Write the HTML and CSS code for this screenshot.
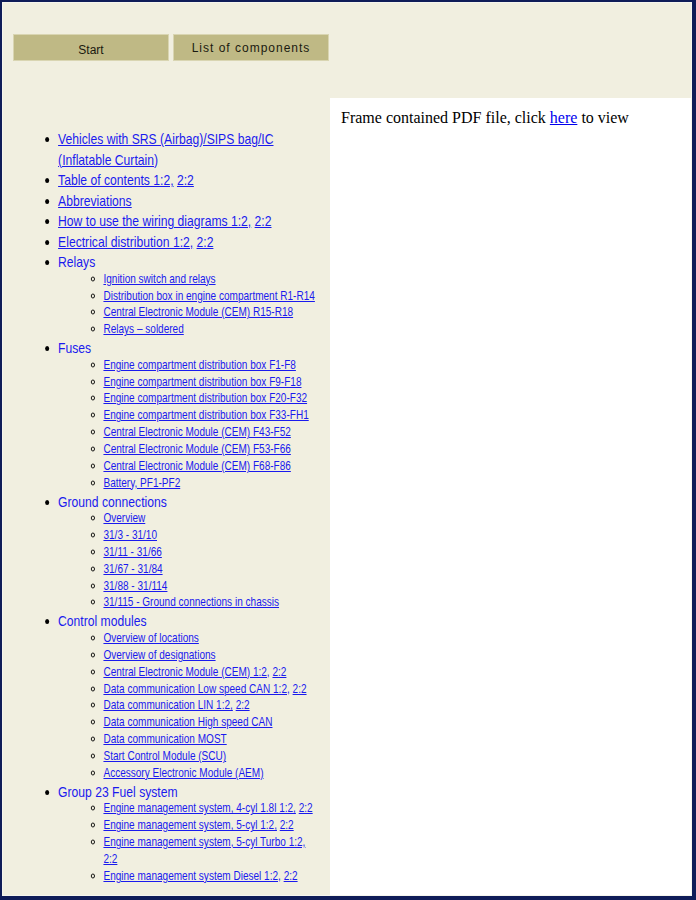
FILE: index.html
```html
<!DOCTYPE html>
<html>
<head>
<meta charset="utf-8">
<link rel="stylesheet" href="styles.css">
</head>
<body>
<div class="window">
  <div class="topbar">
    <a class="btn" href="#">Start</a>
    <a class="btn spaced" href="#">List of components</a>
  </div>
  <div class="main">
    <div class="left">
      <ul class="toc">
        <li><a href="#">Vehicles with SRS (Airbag)/SIPS bag/IC (Inflatable Curtain)</a></li>
        <li><a href="#">Table of contents 1:2,</a> <a href="#">2:2</a></li>
        <li><a href="#">Abbreviations</a></li>
        <li><a href="#">How to use the wiring diagrams 1:2,</a> <a href="#">2:2</a></li>
        <li><a href="#">Electrical distribution 1:2,</a> <a href="#">2:2</a></li>
        <li><span class="head">Relays</span>
          <ul class="sub">
            <li><a href="#">Ignition switch and relays</a></li>
            <li><a href="#">Distribution box in engine compartment R1-R14</a></li>
            <li><a href="#">Central Electronic Module (CEM) R15-R18</a></li>
            <li><a href="#">Relays – soldered</a></li>
          </ul>
        </li>
        <li><span class="head">Fuses</span>
          <ul class="sub">
            <li><a href="#">Engine compartment distribution box F1-F8</a></li>
            <li><a href="#">Engine compartment distribution box F9-F18</a></li>
            <li><a href="#">Engine compartment distribution box F20-F32</a></li>
            <li><a href="#">Engine compartment distribution box F33-FH1</a></li>
            <li><a href="#">Central Electronic Module (CEM) F43-F52</a></li>
            <li><a href="#">Central Electronic Module (CEM) F53-F66</a></li>
            <li><a href="#">Central Electronic Module (CEM) F68-F86</a></li>
            <li><a href="#">Battery, PF1-PF2</a></li>
          </ul>
        </li>
        <li><span class="head">Ground connections</span>
          <ul class="sub">
            <li><a href="#">Overview</a></li>
            <li><a href="#">31/3 - 31/10</a></li>
            <li><a href="#">31/11 - 31/66</a></li>
            <li><a href="#">31/67 - 31/84</a></li>
            <li><a href="#">31/88 - 31/114</a></li>
            <li><a href="#">31/115 - Ground connections in chassis</a></li>
          </ul>
        </li>
        <li><span class="head">Control modules</span>
          <ul class="sub">
            <li><a href="#">Overview of locations</a></li>
            <li><a href="#">Overview of designations</a></li>
            <li><a href="#">Central Electronic Module (CEM) 1:2,</a> <a href="#">2:2</a></li>
            <li><a href="#">Data communication Low speed CAN 1:2,</a> <a href="#">2:2</a></li>
            <li><a href="#">Data communication LIN 1:2,</a> <a href="#">2:2</a></li>
            <li><a href="#">Data communication High speed CAN</a></li>
            <li><a href="#">Data communication MOST</a></li>
            <li><a href="#">Start Control Module (SCU)</a></li>
            <li><a href="#">Accessory Electronic Module (AEM)</a></li>
          </ul>
        </li>
        <li><span class="head">Group 23 Fuel system</span>
          <ul class="sub">
            <li><a href="#">Engine management system, 4-cyl 1.8l 1:2,</a> <a href="#">2:2</a></li>
            <li><a href="#">Engine management system, 5-cyl 1:2,</a> <a href="#">2:2</a></li>
            <li><a href="#">Engine management system, 5-cyl Turbo 1:2,</a> <a href="#">2:2</a></li>
            <li><a href="#">Engine management system Diesel 1:2,</a> <a href="#">2:2</a></li>
          </ul>
        </li>
      </ul>
    </div>
    <div class="right">
      <p class="pdf">Frame contained PDF file, click <a href="#">here</a> to view</p>
    </div>
  </div>
</div>
</body>
</html>
```
FILE: styles.css
```css
html, body {
  margin: 0;
  padding: 0;
  height: 100%;
}
body {
  background: #0f1c58;
  overflow: hidden;
}
.window {
  margin: 2px 4px 4px 2px;
  height: 892px;
  border: 1px solid #f6f5ee;
  display: flex;
  flex-direction: column;
  background: #f1efe0;
  overflow: hidden;
}
.topbar {
  flex: 0 0 95px;
  box-sizing: border-box;
  padding: 31px 0 0 10px;
  display: flex;
  gap: 4px;
  align-items: flex-start;
}
.btn {
  width: 156px;
  height: 27px;
  box-sizing: border-box;
  background: #bfb985;
  border: 1px solid #d9d5b2;
  color: #1a1a10;
  font-family: "Liberation Sans", Arial, sans-serif;
  font-size: 12px;
  text-decoration: none;
  display: flex;
  align-items: center;
  justify-content: center;
  padding-top: 5px;
}
.btn.spaced {
  letter-spacing: 1px;
  padding-top: 1px;
}
.main {
  flex: 1 1 auto;
  min-height: 0;
  display: flex;
}
.left {
  width: 327px;
  flex: 0 0 327px;
  background: #f1efe0;
  overflow: hidden;
}
.right {
  flex: 1;
  background: #ffffff;
}
.toc {
  width: 392px;
  box-sizing: border-box;
  margin: 31px 0 0 0;
  padding: 0 0 0 68px;
  transform: scaleX(0.81);
  transform-origin: 0 0;
  font-family: "Liberation Sans", Arial, sans-serif;
  font-size: 15px;
  line-height: 20.5px;
  color: #1a1aee;
}
.toc > li::marker {
  color: #000;
  font-size: 16px;
}
.toc a {
  color: #1a1aee;
}
.head {
  color: #1a1aee;
}
.sub {
  margin: -1.8px 0 0 0;
  padding-left: 56px;
  font-size: 12.4px;
  line-height: 16.85px;
  list-style: circle;
}
.sub li::marker {
  color: #000;
  font-size: 13px;
}
.pdf {
  margin: 0;
  padding: 10px 0 0 11px;
  font-family: "Liberation Serif", "Times New Roman", serif;
  font-size: 16px;
  line-height: 19px;
  color: #000;
}
.pdf a {
  color: #0000ee;
}
```
